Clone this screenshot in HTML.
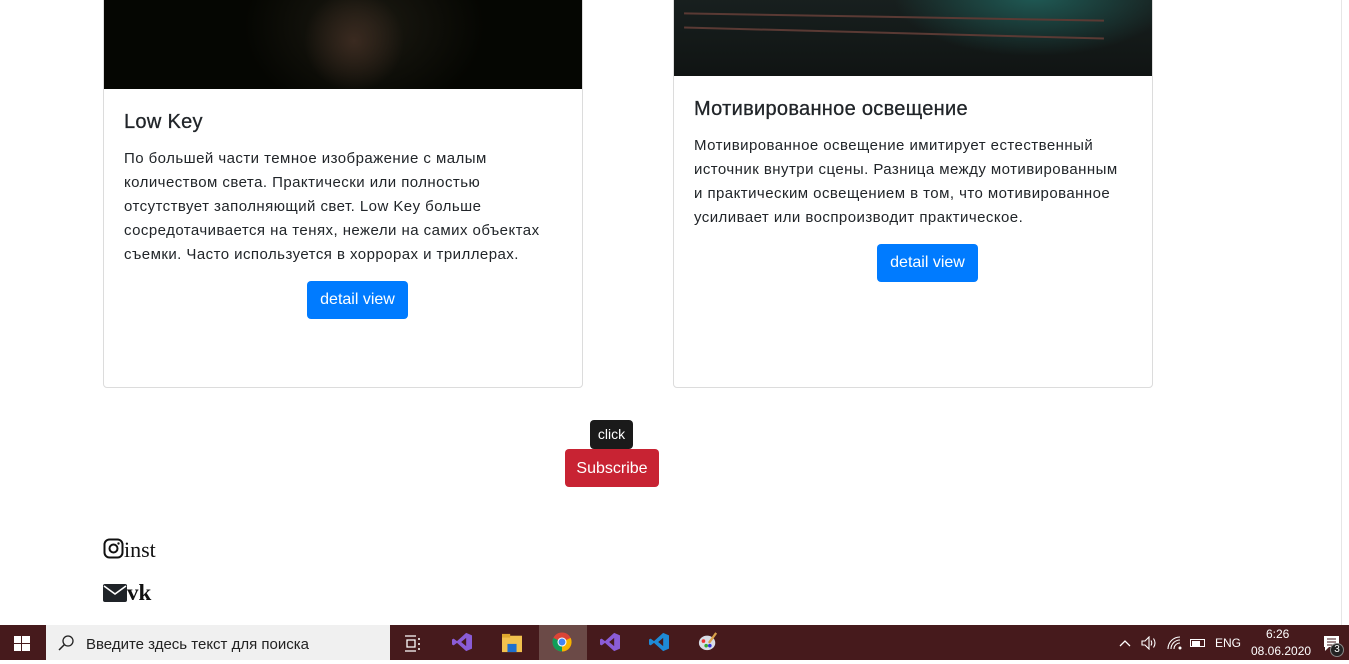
<!DOCTYPE html>
<html><head><meta charset="utf-8"><style>
*{margin:0;padding:0;box-sizing:border-box}
body{width:1349px;height:660px;overflow:hidden;background:#fff;font-family:"Liberation Sans","DejaVu Sans",sans-serif;color:#212529;position:relative}
.card{position:absolute;border:1px solid #dcdcdc;border-radius:4px;overflow:hidden;background:#fff}
.img1{position:absolute;left:0;top:0;width:100%;height:93px;background:radial-gradient(ellipse 50px 50px at 250px 45px,#3a2a20,transparent),radial-gradient(ellipse 120px 90px at 260px 30px,#1c1a12,transparent),#050602}
.img2{position:absolute;left:0;top:0;width:100%;height:80px;background:radial-gradient(ellipse 140px 60px at 360px 0px,#1f5a55,transparent),linear-gradient(180deg,#18201f,#101413)}
.rail{position:absolute;height:2px;background:#5a3a34}
h5{position:absolute;font-size:20px;font-weight:normal;color:#212529;white-space:nowrap;letter-spacing:0.3px;-webkit-text-stroke:0.3px #212529}
p{position:absolute;font-size:15px;line-height:24px;white-space:nowrap;color:#212529;letter-spacing:0.45px}
.btn{position:absolute;background:#007bff;color:#fff;font-size:16px;border-radius:4px;text-align:center;line-height:38px;height:38px}
.tb{position:absolute;left:0;top:625px;width:1349px;height:35px;background:#461a1c}
.search{position:absolute;left:46px;top:0;width:344px;height:35px;background:#f0f0f0;font-size:15px;color:#222;line-height:39px;padding-left:40px}
.ti{position:absolute;top:8px;width:20px;height:20px}
.tray{position:absolute;color:#fff;font-size:12px}
</style></head><body>
<div class="card" style="left:103px;top:-5px;width:480px;height:393px">
 <div class="img1"></div>
 <h5 style="left:20px;top:115px">Low Key</h5>
 <p style="left:20px;top:151px">По большей части темное изображение с малым<br>количеством света. Практически или полностью<br>отсутствует заполняющий свет. Low Key больше<br>сосредотачивается на тенях, нежели на самих объектах<br>съемки. Часто используется в хоррорах и триллерах.</p>
 <div class="btn" style="left:203px;top:285px;width:101px">detail view</div>
</div>
<div class="card" style="left:673px;top:-5px;width:480px;height:393px">
 <div class="img2"></div>
 <div class="rail" style="left:10px;top:20px;width:420px;transform:rotate(1deg)"></div>
 <div class="rail" style="left:10px;top:36px;width:420px;transform:rotate(1.5deg)"></div>
 <h5 style="left:20px;top:102px">Мотивированное освещение</h5>
 <p style="left:20px;top:138px">Мотивированное освещение имитирует естественный<br>источник внутри сцены. Разница между мотивированным<br>и практическим освещением в том, что мотивированное<br>усиливает или воспроизводит практическое.</p>
 <div class="btn" style="left:203px;top:248px;width:101px">detail view</div>
</div>
<div style="position:absolute;left:590px;top:420px;width:43px;height:29px;background:#1a1a1a;border-radius:4px;color:#fff;font-size:14px;text-align:center;line-height:29px">click</div>
<div style="position:absolute;left:606px;top:449px;width:0;height:0;border-left:6px solid transparent;border-right:6px solid transparent;border-top:5px solid #111"></div>
<div style="position:absolute;left:565px;top:449px;width:94px;height:38px;background:#c82333;border-radius:4px;color:#fff;font-size:16px;text-align:center;line-height:40px">Subscribe</div>
<svg style="position:absolute;left:103px;top:538px" width="21" height="21" viewBox="0 0 21 21"><rect x="1.5" y="1.5" width="18" height="18" rx="5" fill="none" stroke="#111" stroke-width="2"/><circle cx="10.5" cy="10.5" r="4" fill="none" stroke="#111" stroke-width="2"/><circle cx="15.5" cy="5.5" r="1.2" fill="#111"/></svg>
<div style="position:absolute;left:124px;top:537px;font-family:'Liberation Serif',serif;font-size:22px;color:#111">inst</div>
<svg style="position:absolute;left:103px;top:584px" width="24" height="18" viewBox="0 0 24 18"><rect x="0" y="0" width="24" height="18" rx="2" fill="#1f2328"/><path d="M1 2 L12 10 L23 2" fill="none" stroke="#fff" stroke-width="1.6"/></svg>
<div style="position:absolute;left:127px;top:580px;font-family:'Liberation Serif',serif;font-size:23px;font-weight:bold;color:#111">vk</div>
<div style="position:absolute;left:1341px;top:0;width:1px;height:625px;background:#e6e6e6"></div>
<div class="tb">
 <svg style="position:absolute;left:14px;top:11px" width="16" height="15" viewBox="0 0 16 15"><rect x="0" y="0" width="7" height="7" fill="#fff"/><rect x="8" y="0" width="8" height="7" fill="#fff"/><rect x="0" y="8" width="7" height="7" fill="#fff"/><rect x="8" y="8" width="8" height="7" fill="#fff"/></svg>
 <div class="search"><svg style="position:absolute;left:12px;top:10px" width="16" height="16" viewBox="0 0 16 16"><circle cx="10" cy="6" r="5" fill="none" stroke="#222" stroke-width="1.3"/><path d="M6.5 9.5 L1 15" stroke="#222" stroke-width="1.5"/></svg>Введите здесь текст для поиска</div>
 <svg style="position:absolute;left:404px;top:10px" width="18" height="17" viewBox="0 0 18 17"><path d="M1 1h11M1 16h11M3 5h8v7H3z" stroke="#fff" fill="none" stroke-width="1.3"/><path d="M15 3v2M15 8v2M15 13v2" stroke="#fff" stroke-width="1.5"/></svg>
 <svg class="ti" style="left:452px;top:7px" width="24" height="22" viewBox="0 0 24 22"><path d="M17 0 L24 3 V19 L17 22 L6 12 L2 15 L0 14 V8 L2 7 L6 10 Z M17 6 L11 11 L17 16 Z" fill="#8a5cd6"/></svg>
 <svg class="ti" style="left:502px;top:8px" width="22" height="20" viewBox="0 0 22 20"><rect x="0" y="2" width="22" height="18" fill="#f2c14e"/><rect x="0" y="0" width="9" height="4" fill="#e0a82e"/><rect x="6" y="11" width="10" height="9" fill="#1e6fd0"/></svg>
 <div style="position:absolute;left:539px;top:0;width:48px;height:35px;background:#6b4a47"></div>
 <svg class="ti" style="left:552px;top:7px" width="22" height="22" viewBox="0 0 22 22"><circle cx="11" cy="11" r="10.5" fill="#db4437"/><path d="M11 11 L1.5 6.5 A10.5 10.5 0 0 0 11 21.5 Z" fill="#0f9d58"/><path d="M11 11 L11 21.5 A10.5 10.5 0 0 0 20.5 6.5 Z" fill="#f4b400"/><circle cx="11" cy="11" r="5" fill="#fff"/><circle cx="11" cy="11" r="3.8" fill="#4285f4"/></svg>
 <svg class="ti" style="left:600px;top:7px" width="24" height="22" viewBox="0 0 24 22"><path d="M17 0 L24 3 V19 L17 22 L6 12 L2 15 L0 14 V8 L2 7 L6 10 Z M17 6 L11 11 L17 16 Z" fill="#8a5cd6"/></svg>
 <svg class="ti" style="left:649px;top:7px" width="24" height="22" viewBox="0 0 24 22"><path d="M17 0 L24 3 V19 L17 22 L6 12 L2 15 L0 14 V8 L2 7 L6 10 Z M17 6 L11 11 L17 16 Z" fill="#1e8ad6"/></svg>
 <svg class="ti" style="left:698px;top:7px" width="22" height="22" viewBox="0 0 22 22"><ellipse cx="10" cy="12" rx="9" ry="8" fill="#d8dde6"/><circle cx="6" cy="10" r="2" fill="#e33"/><circle cx="9" cy="15" r="2" fill="#3a3"/><circle cx="13" cy="15" r="2" fill="#33d"/><path d="M20 1 L12 12" stroke="#d9a24a" stroke-width="2.5"/></svg>
 <svg style="position:absolute;left:1119px;top:14px" width="12" height="8" viewBox="0 0 12 8"><path d="M1 7 L6 2 L11 7" fill="none" stroke="#fff" stroke-width="1.3"/></svg>
 <svg style="position:absolute;left:1141px;top:11px" width="16" height="14" viewBox="0 0 16 14"><path d="M1 5h3l4-4v12l-4-4H1z" fill="none" stroke="#fff" stroke-width="1.1"/><path d="M10 4.5q1.5 2.5 0 5M12.5 2.5q3 4.5 0 9" fill="none" stroke="#fff" stroke-width="1.1"/></svg>
 <svg style="position:absolute;left:1167px;top:11px" width="16" height="14" viewBox="0 0 16 14"><path d="M1 13A12 12 0 0 1 13 1M4 13A9 9 0 0 1 13 4M7 13A6 6 0 0 1 13 7" fill="none" stroke="#fff" stroke-width="1.1"/><circle cx="13" cy="12" r="1.5" fill="#fff"/></svg>
 <div style="position:absolute;left:1190px;top:14px;width:15px;height:8px;border:1.5px solid #fff"><div style="width:8px;height:5px;background:#fff;margin:0.5px"></div></div>
 <div class="tray" style="left:1215px;top:11px">ENG</div>
 <div class="tray" style="left:1266px;top:2px">6:26</div>
 <div class="tray" style="left:1251px;top:19px">08.06.2020</div>
 <svg style="position:absolute;left:1323px;top:10px" width="18" height="17" viewBox="0 0 18 17"><path d="M1 1h15v11H6l-4 4V12H1z" fill="#fff"/><path d="M4 4h9M4 7h9M4 10h9" stroke="#461a1c" stroke-width="1"/></svg>
 <div style="position:absolute;left:1330px;top:18px;width:14px;height:14px;border-radius:50%;background:#222;border:1px solid #888;color:#fff;font-size:10px;text-align:center;line-height:12px">3</div>
</div>
</body></html>
